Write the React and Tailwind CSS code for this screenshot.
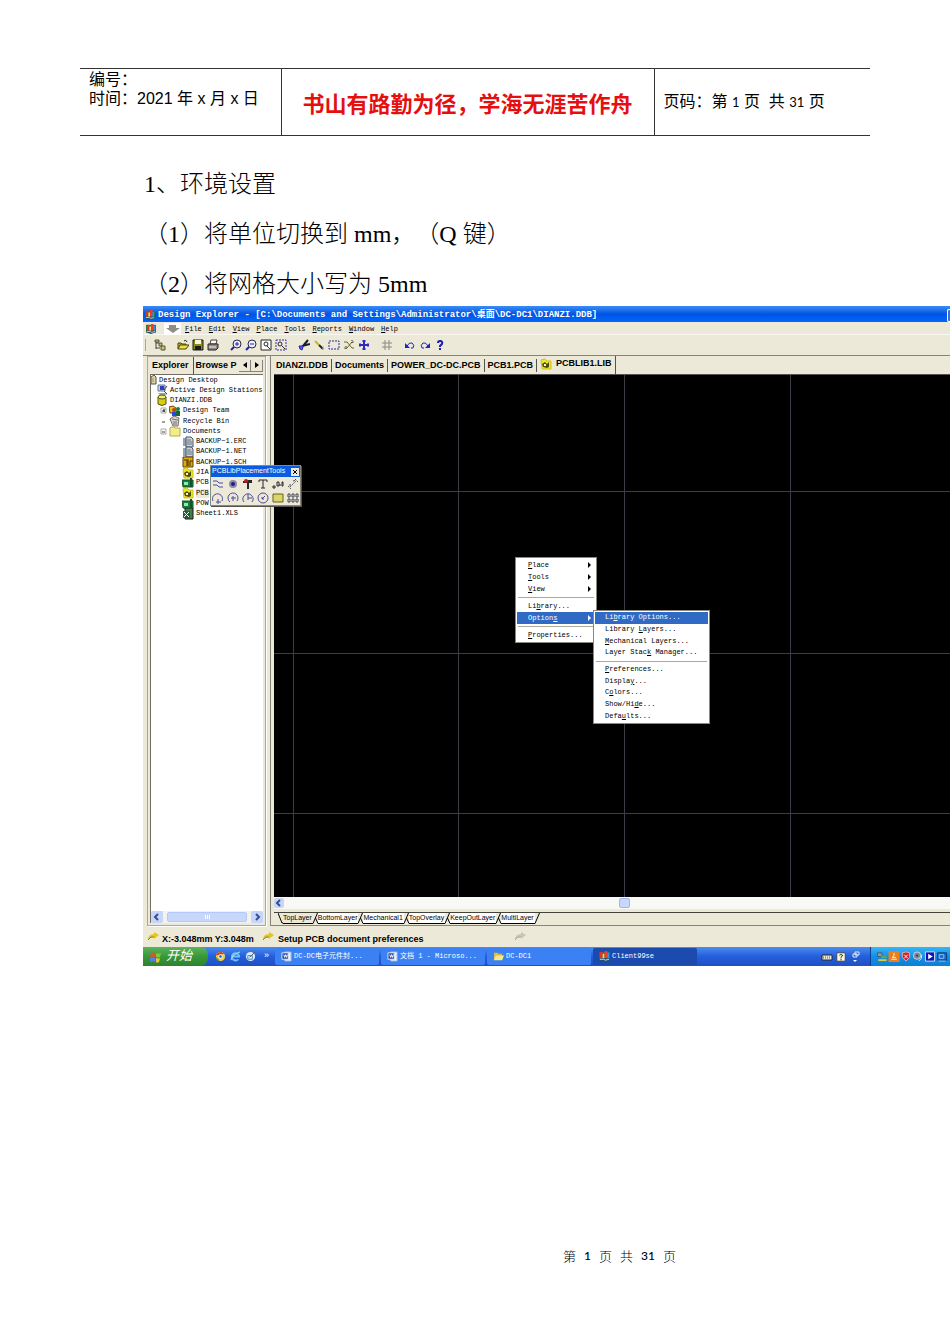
import clsx from 'clsx';

const menus = [
    ['F', 'ile'],
    ['E', 'dit'],
    ['V', 'iew'],
    ['P', 'lace'],
    ['T', 'ools'],
    ['R', 'eports'],
    ['W', 'indow'],
    ['H', 'elp'],
];

const treeItems = [
    { level: 0, label: 'Design Desktop', icon: 'desktop' },
    { level: 1, label: 'Active Design Stations', icon: 'station' },
    { level: 1, label: 'DIANZI.DDB', icon: 'database' },
    { level: 2, label: 'Design Team', icon: 'team', expander: '+' },
    { level: 2, label: 'Recycle Bin', icon: 'bin' },
    { level: 2, label: 'Documents', icon: 'folder', expander: '-' },
    { level: 3, label: 'BACKUP~1.ERC', icon: 'text' },
    { level: 3, label: 'BACKUP~1.NET', icon: 'text' },
    { level: 3, label: 'BACKUP~1.SCH', icon: 'schematic' },
    { level: 3, label: 'JIA', icon: 'library' },
    { level: 3, label: 'PCB', icon: 'pcb' },
    { level: 3, label: 'PCB', icon: 'library', selected: true },
    { level: 3, label: 'POW', icon: 'pcb' },
    { level: 3, label: 'Sheet1.XLS', icon: 'sheet' },
];

const documentTabs = ['DIANZI.DDB', 'Documents', 'POWER_DC-DC.PCB', 'PCB1.PCB'];
const layerTabs = ['TopLayer', 'BottomLayer', 'Mechanical1', 'TopOverlay', 'KeepOutLayer', 'MultiLayer'];

// each label is [before, underlined letter, after]
const contextMenu = [
    { label: ['', 'P', 'lace'], arrow: true },
    { label: ['', 'T', 'ools'], arrow: true },
    { label: ['', 'V', 'iew'], arrow: true },
    null,
    { label: ['Li', 'b', 'rary...'] },
    { label: ['Option', 's', ''], arrow: true, active: true },
    null,
    { label: ['', 'P', 'roperties...'] },
];

const optionsMenu = [
    { label: ['Li', 'b', 'rary Options...'], active: true },
    { label: ['Library ', 'L', 'ayers...'] },
    { label: ['', 'M', 'echanical Layers...'] },
    { label: ['Layer Stac', 'k', ' Manager...'] },
    null,
    { label: ['', 'P', 'references...'] },
    { label: ['Displa', 'y', '...'] },
    { label: ['C', 'o', 'lors...'] },
    { label: ['Show/Hi', 'd', 'e...'] },
    { label: ['Defa', 'u', 'lts...'] },
];

function Icon({ children, className = 'h-3 w-3' }) {
    return (
        <svg viewBox="0 0 12 12" fill="none" className={clsx('shrink-0', className)} aria-hidden="true">
            {children}
        </svg>
    );
}

function AppIcon({ className }) {
    return (
        <Icon className={className}>
            <path d="M0 1h12v9H0z" fill="#1f7a4d" />
            <path d="M1 1h3v7H1z" fill="#e0342b" />
            <path d="M4 3h2v5H4z" fill="#f7d94c" />
            <path d="M6 0h3v8H6z" fill="#ef3b2f" />
            <path d="M9 2h2v6H9z" fill="#3f8cf0" />
            <path d="M0 8h12v2l-6 2-6-2z" fill="#27506b" />
            <path d="M1 9h4l2 1 4-1" stroke="#cfe3ea" />
        </Icon>
    );
}

function TreeIcon({ name }) {
    switch (name) {
        case 'desktop':
            return (
                <svg viewBox="0 0 6 10" className="h-[10px] w-[6px] shrink-0" aria-hidden="true">
                    <path d="M0 2l3-2 2 2v7H0z" fill="#d6d3b8" stroke="#57534e" />
                    <path d="M0 4h3M0 6h3" stroke="#ca8a04" />
                </svg>
            );
        case 'station':
            return (
                <Icon>
                    <path d="M2 1h7v6H2z" fill="#cbd5e1" stroke="#64748b" />
                    <path d="M4 2h4v4H4z" fill="#2f3fc4" />
                    <path d="M2 9h7l2 2H4z" fill="#94a3b8" />
                    <path d="M8 6l3-4M8 7l3 3" stroke="#334155" />
                </Icon>
            );
        case 'database':
            return (
                <Icon>
                    <path d="M2 3v7q4 3 8 0V3z" fill="#d6ce12" stroke="#57530b" />
                    <ellipse cx="6" cy="3" rx="4" ry="2" fill="#f5f06a" stroke="#57530b" />
                </Icon>
            );
        case 'team':
            return (
                <Icon>
                    <path d="M0 2l4-1 3 2v5H1z" fill="#e8c51c" stroke="#713f12" />
                    <circle cx="5" cy="5" r="2" fill="#c2410c" />
                    <circle cx="9" cy="4" r="2" fill="#15803d" />
                    <path d="M3 7h4v4H3z" fill="#1d4ed8" />
                    <path d="M7 6h4v5H7z" fill="#166534" />
                </Icon>
            );
        case 'bin':
            return (
                <Icon>
                    <path d="M1 4l4-3 5 2-1 8H4z" fill="#d6d3d1" stroke="#78716c" />
                    <path d="M3 4l6 1M5 6v4M7 6v4" stroke="#78716c" />
                </Icon>
            );
        case 'folder':
            return (
                <Icon>
                    <path d="M1 3l1-1h3l1 1h5v8H1z" fill="#f3ee8c" stroke="#b5ad4a" />
                </Icon>
            );
        case 'text':
            return (
                <Icon>
                    <path d="M1 2h3v8H1z" fill="#94a3b8" />
                    <path d="M4 1h5l2 2v8H4z" fill="#cbd5d5" stroke="#475569" />
                    <path d="M5 4h4M5 6h5M5 8h5" stroke="#64748b" />
                </Icon>
            );
        case 'schematic':
            return (
                <Icon>
                    <path d="M1 1h10v10H1z" fill="#e3a90c" stroke="#57430b" />
                    <path d="M2 4h3v6M6 3v7M8 5h3M8 5v5" stroke="#3f2f06" />
                </Icon>
            );
        case 'library':
            return (
                <Icon>
                    <path d="M1 2l4-1 2 2h4v8H2z" fill="#f2e61a" stroke="#c9bf2a" />
                    <path d="M2 6l3-2 2 2 2-2v5l-2 1-4-1z" fill="#4d4a16" />
                    <path d="M4 6h2v2H4z" fill="#fef9c3" />
                </Icon>
            );
        case 'pcb':
            return (
                <Icon>
                    <path d="M0 3h11v7H1z" fill="#15803d" stroke="#14532d" />
                    <path d="M2 5h4v3H2z" fill="#86efac" />
                    <path d="M8 1h2v9H8z" fill="#14532d" />
                </Icon>
            );
        default:
            return (
                <Icon>
                    <path d="M3 0h8v11H3z" fill="#3f7f4a" stroke="#1c1917" />
                    <path d="M1 3h7v7H1z" fill="#166534" />
                    <path d="M2 4l5 5M7 4L2 9" stroke="#f8fafc" />
                </Icon>
            );
    }
}

const toolIcons = [
    {
        name: 'Browse',
        art: (
            <>
                <path d="M2 1v9M2 4h3M2 9h4" stroke="#44443a" />
                <path d="M1 1h4v2H1zM5 4h3v3H5zM7 7h4v4H7z" fill="#c9c46b" stroke="#55553a" />
            </>
        ),
        box: 'ml-1 mr-2',
    },
    {
        name: 'Open',
        art: (
            <>
                <path d="M1 10V4h3l1 1h4v2" fill="#b8ab24" stroke="#4b4609" />
                <path d="M1 10l2-4h9l-3 4z" fill="#ece34b" stroke="#4b4609" />
                <path d="M7 2q2-2 3 1" stroke="#292524" />
            </>
        ),
    },
    {
        name: 'Save',
        art: (
            <>
                <path d="M1 1h10v10H1z" fill="#8b8a13" stroke="#1c1917" />
                <path d="M3 1h6v4H3z" fill="#f5f5dc" />
                <path d="M3 7h6v4H3z" fill="#1c1917" />
            </>
        ),
    },
    {
        name: 'Print',
        art: (
            <>
                <path d="M4 1h6L9 5H3z" fill="#fff" stroke="#44403c" />
                <path d="M1 5h10v4l-2 2H1z" fill="#8a8a82" stroke="#292524" />
                <path d="M2 8h7" stroke="#f5f5f4" />
            </>
        ),
        box: 'mr-2',
    },
    {
        name: 'Zoom in',
        art: (
            <>
                <circle cx="7" cy="5" r="4" fill="#eef" stroke="#26263f" />
                <path d="M5 5h4M7 3v4" stroke="#1d1dc4" />
                <path d="M4 8l-3 3" stroke="#2222a5" strokeWidth="2" />
            </>
        ),
    },
    {
        name: 'Zoom out',
        art: (
            <>
                <circle cx="7" cy="5" r="4" fill="#eef" stroke="#26263f" />
                <path d="M5 5h4" stroke="#1d1dc4" />
                <path d="M4 8l-3 3" stroke="#2222a5" strokeWidth="2" />
            </>
        ),
    },
    {
        name: 'Fit document',
        art: (
            <>
                <path d="M1 1h10v10H1z" fill="#fff" stroke="#292524" />
                <circle cx="6" cy="5" r="2" stroke="#292524" />
                <path d="M7 7l3 3" stroke="#292524" />
            </>
        ),
    },
    {
        name: 'Fit area',
        art: (
            <>
                <path d="M1 1h10v10H1z" stroke="#3333a5" strokeDasharray="2 1" />
                <circle cx="5" cy="5" r="2" stroke="#292524" />
                <path d="M7 7l3 3" stroke="#292524" />
            </>
        ),
        box: 'mr-2',
    },
    {
        name: 'Cut',
        art: (
            <>
                <path d="M10 1L5 7M12 5L4 7" stroke="#1c1c2b" strokeWidth="2" />
                <path d="M1 7h4v1l-1 3-2-1z" fill="#5b5be6" stroke="#2525b4" />
            </>
        ),
    },
    {
        name: 'Draw',
        art: (
            <>
                <path d="M2 2l4 4" stroke="#c9b71f" strokeWidth="2" />
                <path d="M6 6l4 4" stroke="#22221c" strokeWidth="2" />
                <path d="M10 7v4" stroke="#aaa" />
            </>
        ),
    },
    {
        name: 'Select area',
        art: <path d="M1 2h10v8H1z" stroke="#2929a5" strokeDasharray="2 1" />,
    },
    {
        name: 'Deselect',
        art: (
            <>
                <path d="M1 3h3l5 6h2M1 9h3l5-6h2" stroke="#6b692b" />
                <path d="M9 1v4M3 7v4" stroke="#292524" strokeDasharray="1 1" />
            </>
        ),
    },
    {
        name: 'Move',
        art: (
            <>
                <path d="M6 1v10M1 6h10" stroke="#2a2ac8" strokeWidth="2" />
                <path d="M4 2h4M4 10h4M2 4v4M10 4v4" stroke="#2a2ac8" />
            </>
        ),
        box: 'mr-2',
    },
    {
        name: 'Snap grid',
        art: <path d="M4 1v10M8 1v10M1 4h10M1 8h10" stroke="#8c8b80" />,
        box: 'mr-2',
    },
    {
        name: 'Undo',
        art: (
            <>
                <path d="M3 7q2-4 5-3 3 2 1 5H7" stroke="#2323bd" />
                <path d="M1 4v5h5z" fill="#2323bd" />
            </>
        ),
    },
    {
        name: 'Redo',
        art: (
            <>
                <path d="M9 7Q7 3 4 4 1 6 3 9h2" stroke="#2323bd" />
                <path d="M11 4v5H6z" fill="#2323bd" />
            </>
        ),
    },
    {
        name: 'Help',
        art: (
            <>
                <path d="M4 4q0-2 2-2 3 0 2 3L6 7v1" stroke="#1c1cb8" strokeWidth="2" />
                <path d="M5 9h2v2H5z" fill="#1c1cb8" />
            </>
        ),
    },
];

const placementTools = [
    { name: 'Track', art: <path d="M1 3h4l2 2h4M1 7h4l2 2h4" stroke="#4a4a9b" /> },
    {
        name: 'Pad',
        art: (
            <>
                <circle cx="6" cy="6" r="4" fill="#8b8ba5" />
                <circle cx="6" cy="6" r="2" fill="#1e1e8f" />
            </>
        ),
    },
    {
        name: 'Via',
        art: (
            <>
                <path d="M1 3h3l2-1h4v3H7v6H5V5H1z" fill="#27272a" />
                <circle cx="4" cy="3" r="2" fill="#b91c1c" />
            </>
        ),
    },
    { name: 'String', art: <path d="M2 4V2h8v2M6 2v8M4 10h4" stroke="#27272a" /> },
    {
        name: 'Coordinate',
        art: (
            <>
                <path d="M0 9h4M2 7v4" stroke="#27272a" />
                <path d="M5 4h2v4H5zM8 6v2M10 4h1v4h-1z" stroke="#27272a" />
            </>
        ),
    },
    {
        name: 'Dimension',
        art: <path d="M1 8l3 3M8 1l3 3M3 9l6-6M6 3l3-1M3 6v3" stroke="#52525b" strokeDasharray="2 1" />,
    },
    { name: 'Arc by edge', art: <path d="M1 9a5 5 0 1 1 9 0M6 7v5M4 10h5" stroke="#4a4a9b" /> },
    { name: 'Arc by center', art: <path d="M3 10a5 5 0 1 1 7-1M6 4v5M4 6h5" stroke="#4a4a9b" /> },
    { name: 'Arc any angle', art: <path d="M2 10a5 5 0 1 1 8 0M6 2v6M6 6h4" stroke="#4a4a9b" /> },
    {
        name: 'Full circle',
        art: (
            <>
                <circle cx="6" cy="6" r="5" stroke="#4a4a9b" />
                <path d="M5 7l3-3M5 5v2h2" stroke="#4a4a9b" />
            </>
        ),
    },
    { name: 'Fill', art: <path d="M1 2h10v8H1z" fill="#dcd66a" stroke="#66621d" /> },
    {
        name: 'Array',
        art: (
            <path d="M1 2h2v3H1zM5 2h2v3H5zM9 2h2v3H9zM1 7h2v3H1zM5 7h2v3H5zM9 7h2v3H9z" fill="#fff" stroke="#3f3f46" />
        ),
    },
];

function TitleBar() {
    return (
        <div className="flex h-4 items-center gap-[3px] bg-linear-to-b from-[#3b8cf5] via-[#0054e3] to-[#0566fb] pt-0.5 pl-0.5 font-[Liberation_Mono,Noto_Sans_CJK_SC,monospace] text-[9px] leading-[13px] font-bold whitespace-nowrap text-white">
            <AppIcon className="h-[10px] w-[10px]" />
            <span className="flex-1 overflow-hidden">
                Design Explorer - [C:\Documents and Settings\Administrator\桌面\DC-DC1\DIANZI.DDB]
            </span>
            <button type="button" aria-label="Minimize" className="h-[13px] w-[3px] shrink-0 rounded-l-xs border border-r-0 border-white bg-[#3c6be0]" />
        </div>
    );
}

function MenuBar() {
    return (
        <nav className="flex h-[13px] items-center border-b border-[#f8f7f0] pt-px pl-[3px]">
            <AppIcon className="h-[10px] w-[10px]" />
            <span className="mr-1 ml-2 flex h-3 w-[17px] items-center justify-center bg-white">
                <svg viewBox="0 0 14 8" className="h-2 w-[14px]" aria-hidden="true">
                    <path d="M3 0h7v3h4L7 8 0 3h3z" fill="#8f8e86" />
                </svg>
            </span>
            <div className="flex gap-[7px]">
                {menus.map(([key, rest]) => (
                    <button key={key + rest} type="button" className="leading-3">
                        <u>{key}</u>
                        {rest}
                    </button>
                ))}
            </div>
        </nav>
    );
}

function Toolbar() {
    return (
        <div className="flex h-5 items-center gap-[3px] pl-0.5">
            <span className="mr-px h-3 w-px bg-[#aca899]" />
            {toolIcons.map((tool) => (
                <button key={tool.name} type="button" aria-label={tool.name} className={clsx('shrink-0', tool.box)}>
                    <Icon>{tool.art}</Icon>
                </button>
            ))}
        </div>
    );
}

function Chevron({ right }) {
    return (
        <svg viewBox="0 0 8 8" className="h-2 w-2" fill="none" aria-hidden="true">
            <path d={right ? 'M3 1l3 3-3 3' : 'M5 1L2 4l3 3'} stroke="#35508f" strokeWidth="2" />
        </svg>
    );
}

function Palette() {
    return (
        <div className="absolute top-[109px] left-[67px] z-10 w-[91px] border border-[#8a887c] bg-[#ece9d8] pb-px shadow-[1px_1px_0_#55534b]">
            <div className="flex h-[11px] items-center justify-between bg-[#0a5be0] px-px font-[Liberation_Sans,sans-serif] text-[7px] whitespace-nowrap text-white">
                PCBLibPlacementTools
                <button type="button" aria-label="Close" className="flex h-2 w-2 items-center justify-center bg-[#ece9d8]">
                    <svg viewBox="0 0 6 6" className="h-[6px] w-[6px]" aria-hidden="true">
                        <path d="M1 1l4 4M5 1L1 5" stroke="#000" />
                    </svg>
                </button>
            </div>
            <div className="grid grid-cols-6 gap-y-0.5 pt-px">
                {placementTools.map((tool) => (
                    <button key={tool.name} type="button" aria-label={tool.name} className="flex justify-center">
                        <Icon>{tool.art}</Icon>
                    </button>
                ))}
            </div>
        </div>
    );
}

function Explorer() {
    return (
        <aside className="flex w-[119px] shrink-0 flex-col border border-[#aca899] pr-0.5 pb-0.5 pl-0.5 shadow-[1px_1px_0_#fff]">
            <div className="flex h-[17px] items-center pl-0.5 font-[Liberation_Sans,sans-serif] text-[9px] font-bold">
                <button type="button" className="h-full border-r border-[#55534b] pr-1">
                    Explorer
                </button>
                <button type="button" className="h-full flex-1 pl-0.5 text-left whitespace-nowrap">
                    Browse P
                </button>
                <button type="button" aria-label="Previous tab" className="flex h-3 w-3 shrink-0 items-center justify-center border-r border-b border-[#85837a]">
                    <span className="border-y-[3px] border-r-4 border-y-transparent border-r-black" />
                </button>
                <button type="button" aria-label="Next tab" className="flex h-3 w-3 shrink-0 items-center justify-center border-r border-b border-[#85837a]">
                    <span className="border-y-[3px] border-l-4 border-y-transparent border-l-black" />
                </button>
            </div>
            <div className="flex flex-1 flex-col justify-between border-t border-l border-[#716f64] bg-white">
                <ul className="grid h-36">
                    {treeItems.map((item, index) => (
                        <li key={index} className="flex min-h-0 items-center">
                            <button
                                type="button"
                                className={clsx(
                                    'flex items-center gap-0.5 whitespace-nowrap',
                                    item.level === 1 && 'pl-[5px]',
                                    item.level === 2 && 'pl-[9px]',
                                    item.level === 3 && 'pl-[31px]',
                                )}
                            >
                                {item.level === 2 && (
                                    <svg viewBox="0 0 7 7" className="h-[7px] w-[7px]" fill="none" aria-hidden="true">
                                        {item.expander && <path d="M1 1h5v5H1z" fill="#fff" stroke="#a8a8a0" />}
                                        <path d="M2 4h3" stroke="#44403c" />
                                        {item.expander === '+' && <path d="M4 2v3" stroke="#000" />}
                                    </svg>
                                )}
                                <TreeIcon name={item.icon} />
                                <span className={clsx('leading-[9px]', item.selected && 'bg-[#ece9d8]')}>{item.label}</span>
                            </button>
                        </li>
                    ))}
                </ul>
                <div className="flex h-3 items-center justify-between bg-[#f3f2ec]">
                    <button type="button" aria-label="Scroll left" className="rounded-xs bg-[#c6d5fb] p-0.5">
                        <Chevron />
                    </button>
                    <span className="flex h-[10px] w-[80px] items-center justify-center gap-px rounded-xs border border-[#b5c8f7] bg-[#c8d7fc]">
                        <i className="h-1 w-px bg-white" />
                        <i className="h-1 w-px bg-white" />
                        <i className="h-1 w-px bg-white" />
                    </span>
                    <button type="button" aria-label="Scroll right" className="rounded-xs bg-[#c6d5fb] p-0.5">
                        <Chevron right />
                    </button>
                </div>
            </div>
        </aside>
    );
}

function PopupMenu({ items, className, padding }) {
    return (
        <div role="menu" className={clsx('absolute flex flex-col border border-[#8a887c] bg-white p-px', className)}>
            {items.map((item, index) =>
                item ? (
                    <button
                        key={item.label.join('')}
                        type="button"
                        role="menuitem"
                        className={clsx(
                            'flex min-h-0 flex-1 items-center justify-between pr-1 text-left leading-[9px] whitespace-nowrap',
                            padding,
                            item.active && 'bg-[#316ac5] text-white',
                        )}
                    >
                        <span>
                            {item.label[0]}
                            <u>{item.label[1]}</u>
                            {item.label[2]}
                        </span>
                        {item.arrow && (
                            <span
                                className={clsx(
                                    'border-y-[3px] border-l-[3px] border-y-transparent',
                                    item.active ? 'border-l-white' : 'border-l-black',
                                )}
                            />
                        )}
                    </button>
                ) : (
                    <hr key={index} className="mx-px my-[2px] h-px shrink-0 border-0 bg-[#aca899]" />
                ),
            )}
        </div>
    );
}

function Canvas() {
    return (
        <div className="relative h-[522px] overflow-hidden bg-black">
            <svg className="h-full w-full" aria-hidden="true">
                <path
                    d="M19.5 0v522M184.5 0v522M350.5 0v522M516.5 0v522M0 116.5h2000M0 278.5h2000M0 438.5h2000"
                    stroke="#3d3d45"
                    fill="none"
                />
            </svg>
            <PopupMenu items={contextMenu} padding="pl-[11px]" className="top-[182px] left-[241px] h-[86px] w-[82px]" />
            <PopupMenu items={optionsMenu} padding="pl-[10px]" className="top-[235px] left-[319px] h-[114px] w-[117px]" />
        </div>
    );
}

function Workspace() {
    return (
        <section className="flex min-w-0 flex-1 flex-col border-b border-l border-[#85837a] pl-[3px]">
            <div className="flex h-[18px] items-center font-[Liberation_Sans,sans-serif] text-[9px] font-bold whitespace-nowrap">
                {documentTabs.map((tab) => (
                    <button key={tab} type="button" className="border-r border-[#55534b] pr-[3px] pl-[3px] leading-[13px] first:pl-0.5">
                        {tab}
                    </button>
                ))}
                <button type="button" className="flex h-full items-center gap-1 border-r border-[#55534b] px-[3px] pb-0.5">
                    <TreeIcon name="library" />
                    PCBLIB1.LIB
                </button>
            </div>
            <div className="border-t border-[#55534b]">
                <Canvas />
                <div className="flex h-3 items-center bg-[#f8f8f4]">
                    <button type="button" aria-label="Scroll left" className="rounded-xs bg-[#c6d5fb] p-px">
                        <Chevron />
                    </button>
                    <span className="ml-[335px] h-[10px] w-[11px] rounded-xs border border-[#9fb6f0] bg-[#c8d7fc]" />
                </div>
            </div>
            <div className="mt-[3px] flex h-3 border-t border-[#44423b] pl-1 font-[Liberation_Sans,sans-serif] text-[7px] leading-[10px]">
                <svg viewBox="0 0 5 11" className="h-[11px] w-[5px]" aria-hidden="true">
                    <path d="M0 0l4 10h1" stroke="#000" fill="none" />
                </svg>
                {layerTabs.map((tab, index) => (
                    <div key={tab} className="flex">
                        <button type="button" className={clsx('border-b border-black pr-px', index > 0 && 'bg-white')}>
                            {tab}
                        </button>
                        <svg viewBox="0 0 5 11" className="h-[11px] w-[5px]" fill="none" aria-hidden="true">
                            <path d="M4.500 0L0 10.500" stroke="#000" />
                            {index < layerTabs.length - 1 && <path d="M2.500 5L5 10.500" stroke="#000" />}
                        </svg>
                    </div>
                ))}
            </div>
        </section>
    );
}

function StatusArrow({ color = '#e3c71b', edge = '#8a7a1a' }) {
    return (
        <svg viewBox="0 0 11 8" className="h-2 w-[11px] shrink-0" aria-hidden="true">
            <path d="M0 8q0-6 6-6V0l5 3-5 4V5Q3 4 0 8z" fill={color} />
            <path d="M0 8q2-4 6-3" fill="none" stroke={edge} />
        </svg>
    );
}

function StatusBar() {
    return (
        <div className="flex h-[19px] items-center pt-1 pl-[5px] font-[Liberation_Sans,sans-serif] text-[9px] font-bold whitespace-nowrap">
            <span className="flex h-4 items-start">
                <StatusArrow />
            </span>
            <span className="ml-[3px] w-[98px]">X:-3.048mm Y:3.048m</span>
            <span className="ml-[3px] flex w-[252px] items-center gap-1">
                <span className="flex h-4 items-start">
                    <StatusArrow />
                </span>
                Setup PCB document preferences
            </span>
            <span className="flex h-4 items-start">
                <StatusArrow color="#c9c6b6" edge="#a8a595" />
            </span>
        </div>
    );
}

function WordIcon() {
    return (
        <Icon className="h-[11px] w-[11px]">
            <path d="M4 1h7v10H4z" fill="#e8eefc" stroke="#9db2e0" />
            <path d="M1 2h7v7H1z" fill="#24489e" stroke="#e8eefc" />
            <path d="M3 4l1 3 1-3 1 3 1-3" stroke="#fff" />
        </Icon>
    );
}

function FolderIcon() {
    return (
        <Icon className="h-[11px] w-[11px]">
            <path d="M1 10V2h4l1 1h4v2" fill="#e0b93c" />
            <path d="M1 10l2-5h9l-2 5z" fill="#fbe88a" />
        </Icon>
    );
}

const tasks = [
    { label: 'DC-DC电子元件封...', icon: <WordIcon /> },
    { label: '文档 1 - Microso...', icon: <WordIcon /> },
    { label: 'DC-DC1', icon: <FolderIcon /> },
    { label: 'Client99se', icon: <AppIcon className="h-[11px] w-[11px]" />, active: true },
];

const trayIcons = [
    {
        name: 'Network',
        art: (
            <>
                <path d="M1 2h5v4H1z" fill="#9a9a9a" stroke="#475569" />
                <path d="M5 5h6v3H5z" fill="#4fae5a" />
                <path d="M2 9h9v2H2z" fill="#d7c94b" />
            </>
        ),
    },
    {
        name: 'Java',
        art: (
            <>
                <path d="M0 0h12v12H0z" fill="#ef7d1a" />
                <path d="M6 2v3L4 7h4M3 9h6" stroke="#fff" />
            </>
        ),
    },
    {
        name: 'Security',
        art: (
            <>
                <path d="M2 2l4-1 4 1v5l-4 4-4-4z" fill="#cf2230" stroke="#e5b1b5" />
                <path d="M4 4l4 4M8 4L4 8" stroke="#fff" />
            </>
        ),
    },
    {
        name: 'Volume',
        art: (
            <>
                <circle cx="5" cy="5" r="4" fill="#7b8794" stroke="#d5dbe2" />
                <circle cx="5" cy="5" r="1" fill="#1e293b" />
                <path d="M10 4q1 4-3 7" stroke="#dbeafe" />
            </>
        ),
    },
    {
        name: 'Player',
        art: (
            <>
                <path d="M1 1h10v10H1z" fill="#0a12b8" stroke="#e2e8f0" />
                <path d="M4 3l5 3-5 3z" fill="#fff" />
            </>
        ),
    },
    {
        name: 'Display',
        art: (
            <>
                <path d="M1 2h10v8H1z" fill="#1668c7" stroke="#0c3a79" />
                <path d="M3 4h5v4H3zM2 11h8" stroke="#93c5fd" />
            </>
        ),
    },
];

function Taskbar() {
    return (
        <div className="flex h-[19px] items-center overflow-hidden bg-linear-to-b from-[#4a8cf0] via-[#245edb] to-[#1f50c4] font-[Liberation_Mono,Noto_Sans_CJK_SC,monospace] whitespace-nowrap text-white">
            <button
                type="button"
                className="flex h-full w-[65px] shrink-0 items-center gap-1 rounded-r-lg bg-linear-to-b from-[#5cb35c] via-[#389838] to-[#2f822f] pl-[7px] text-[13px] leading-4 italic"
            >
                <Icon>
                    <path d="M1 2q2-1 4 0v4Q3 5 0 6z" fill="#e5502a" />
                    <path d="M6 2q3 1 5 0l-1 4q-2 1-4 0z" fill="#7cc637" />
                    <path d="M0 7q3-1 5 0v4q-2-1-5 0z" fill="#4b83ea" />
                    <path d="M6 7q2 1 4 0l-1 4q-2 1-3 0z" fill="#f3c72f" />
                </Icon>
                开始
            </button>
            <div className="flex w-[67px] shrink-0 items-center gap-1 pl-[7px]">
                <button type="button" aria-label="Browser">
                    <Icon className="h-[11px] w-[11px]">
                        <circle cx="6" cy="6" r="5" fill="#f5d03c" />
                        <path d="M1 5q1-4 6-4l3 2-5 1z" fill="#d43a2b" />
                        <path d="M1 6l4 4-1 1Q1 9 1 6z" fill="#3c9d47" />
                        <circle cx="6" cy="6" r="2" fill="#2563c9" stroke="#fff" />
                    </Icon>
                </button>
                <button type="button" aria-label="Internet Explorer">
                    <Icon className="h-[11px] w-[11px]">
                        <path d="M9 9a4 4 0 1 1 1-3H3" stroke="#6cc5fa" strokeWidth="2" />
                        <path d="M1 10Q2 4 11 1" stroke="#b9e3fc" />
                    </Icon>
                </button>
                <button type="button" aria-label="Show desktop">
                    <Icon className="h-[11px] w-[11px]">
                        <circle cx="6" cy="6" r="5" fill="#dbeafe" />
                        <path d="M3 5h5v4H3z" stroke="#3b82c4" />
                        <path d="M5 7l6-6" stroke="#475569" />
                    </Icon>
                </button>
                <span className="pb-1 pl-1 font-[Liberation_Sans,sans-serif] text-[9px] leading-3">»</span>
            </div>
            <div className="flex h-full shrink-0 gap-0.5 py-px">
                {tasks.map((task) => (
                    <button
                        key={task.label}
                        type="button"
                        className={clsx(
                            'flex w-[104px] items-center gap-0.5 overflow-hidden rounded-xs pl-[6px]',
                            task.active ? 'bg-[#1c4bb0]' : 'bg-[#3c81f3]',
                        )}
                    >
                        {task.icon}
                        <span>{task.label}</span>
                    </button>
                ))}
            </div>
            <div className="ml-auto flex shrink-0 items-center gap-[3px] pr-[9px]">
                <Icon>
                    <path d="M1 4h10v5H1z" fill="#ece9d8" stroke="#292524" />
                    <path d="M2 6h8M2 7h8" stroke="#78716c" strokeDasharray="1 1" />
                </Icon>
                <Icon className="h-[10px] w-[10px]">
                    <path d="M1 1h10v10H1z" fill="#fffbe0" stroke="#44403c" />
                    <path d="M4 4q2-2 4 0 0 1-2 2v1M6 8v2" stroke="#000" />
                </Icon>
                <Icon>
                    <path d="M6 1h4v3H6zM4 3h4v3H4z" stroke="#dbeafe" />
                    <path d="M4 9h4l-2 2z" fill="#fff" />
                </Icon>
            </div>
            <div className="flex h-full w-[80px] shrink-0 items-center border-l border-[#0b3f96] bg-linear-to-b from-[#37b6f5] via-[#1290e8] to-[#0f7fd2] pl-[5px]">
                {trayIcons.map((tray) => (
                    <button key={tray.name} type="button" aria-label={tray.name} className="shrink-0">
                        <Icon className="h-[11px] w-3">{tray.art}</Icon>
                    </button>
                ))}
            </div>
        </div>
    );
}

function DesignExplorer() {
    return (
        <div className="-mt-[3px] ml-[143px] overflow-hidden bg-[#ece9d8] font-[Liberation_Mono,Noto_Sans_CJK_SC,monospace] text-[7px] text-black">
            <TitleBar />
            <MenuBar />
            <Toolbar />
            <div className="relative flex h-[573px] gap-1 border-t border-[#85837a] pb-0.5 pl-1">
                <Explorer />
                <Workspace />
                <Palette />
            </div>
            <StatusBar />
            <Taskbar />
        </div>
    );
}

export default function App() {
    return (
        <div className="flex min-h-screen flex-col overflow-hidden bg-white pt-[68px] text-black">
            <header className="mx-20">
                <table className="w-full table-fixed border-y border-[#333] font-[Liberation_Sans,Noto_Sans_CJK_SC,sans-serif] text-base leading-[19px]">
                    <tbody>
                        <tr className="h-[67px]">
                            <td className="w-[201px] border-r border-[#333] pt-px pl-[9px] align-top">
                                编号：
                                <br />
                                时间：2021 年 x 月 x 日
                            </td>
                            <td className="border-r border-[#333] pt-1 text-center text-[22px] font-bold whitespace-nowrap text-[#e60f0f]">
                                书山有路勤为径，学海无涯苦作舟
                            </td>
                            <td className="w-[216px] pl-[9px] whitespace-pre">
                                页码：第 <span className="font-[Lato,sans-serif] text-[13px]">1</span> 页{'  '}共{' '}
                                <span className="font-[Lato,sans-serif] text-[13px]">31</span> 页
                            </td>
                        </tr>
                    </tbody>
                </table>
            </header>

            <main className="mt-[23px]">
                <div className="pl-36 font-[Liberation_Serif,Noto_Sans_CJK_SC,serif] text-2xl leading-[50px] font-light [text-spacing-trim:space-all]">
                    <p>1、环境设置</p>
                    <p>（1）将单位切换到 mm，（Q 键）</p>
                    <p>（2）将网格大小写为 5mm</p>
                </div>
                <DesignExplorer />
            </main>

            <footer className="mt-auto flex gap-2 pb-[78px] pl-[563px] font-[Lato,Noto_Sans_CJK_SC,sans-serif] text-[13px] leading-5">
                <span className="font-light">第</span>
                <span className="text-xs leading-5 font-medium">1</span>
                <span className="font-light">页</span>
                <span className="font-light">共</span>
                <span className="text-xs leading-5 font-medium">31</span>
                <span className="font-light">页</span>
            </footer>
        </div>
    );
}
